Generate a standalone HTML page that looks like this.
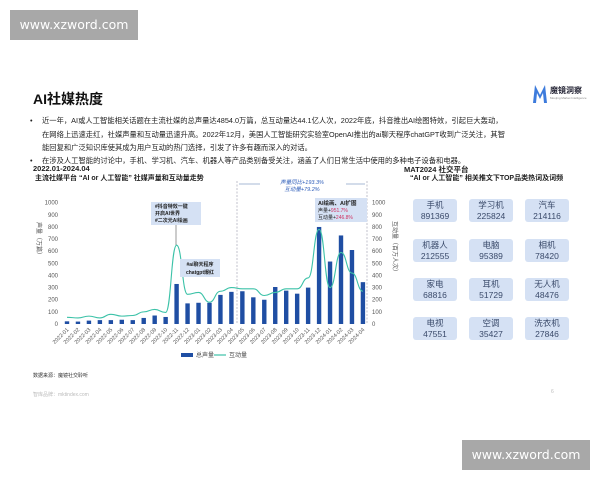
<!DOCTYPE html>
<html><head><meta charset="utf-8">
<style>
body{margin:0;width:600px;height:480px;background:#fff;position:relative;overflow:hidden;font-family:"Liberation Sans","Noto Sans CJK SC",sans-serif;color:#222}
.a{position:absolute;white-space:nowrap}
.wm{position:absolute;background:#a8a8a8;color:#fff;font-size:12.5px;width:128px;height:30px;line-height:30px;text-align:center;font-family:"DejaVu Sans","Liberation Sans",sans-serif}
.bl{font-size:7.3px;line-height:13.5px;color:#222}
.bx{position:absolute;width:44px;height:23px;background:#d5e1f4;border-radius:3px;color:#3a4a6a;font-size:8.5px;line-height:10.5px;text-align:center;padding-top:1px;box-sizing:border-box}
</style></head><body>
<div class="wm" style="left:10px;top:10px">www.xzword.com</div>
<div class="wm" style="left:462px;top:440px">www.xzword.com</div>

<div class="a" style="left:33px;top:89px;font-size:14px;font-weight:bold;color:#111">AI社媒热度</div>
<svg class="a" style="left:532px;top:84px" width="16" height="20" viewBox="0 0 16 20"><path d="M1 19 L3 1 L8 11 L13 1 L15 19 L12 19 L11 9 L8 15 L5 9 L4 19Z" fill="#3d7bdc"/></svg>
<div class="a" style="left:550px;top:85px;font-size:8px;font-weight:bold;color:#223">魔镜洞察</div>
<div class="a" style="left:550px;top:96px;font-size:3px;color:#888">Moojing Market Intelligence</div>

<div class="a bl" style="left:30px;top:114px">•</div>
<div class="a bl" style="left:42px;top:114px">近一年，AI或人工智能相关话题在主流社媒的总声量达4854.0万篇，总互动量达44.1亿人次，2022年底，抖音推出AI绘图特效，引起巨大轰动，</div>
<div class="a bl" style="left:42px;top:127.5px">在网络上迅速走红，社媒声量和互动量迅速升高。2022年12月，美国人工智能研究实验室OpenAI推出的ai聊天程序chatGPT收到广泛关注，其智</div>
<div class="a bl" style="left:42px;top:141px">能回复和广泛知识库使其成为用户互动的热门选择，引发了许多有趣而深入的对话。</div>
<div class="a bl" style="left:30px;top:154px">•</div>
<div class="a bl" style="left:42px;top:154px">在涉及人工智能的讨论中，手机、学习机、汽车、机器人等产品类别备受关注，涵盖了人们日常生活中使用的多种电子设备和电器。</div>

<div class="a" style="left:33px;top:164px;font-size:7.5px;font-weight:bold">2022.01-2024.04</div>
<div class="a" style="left:35px;top:173px;font-size:7px;font-weight:bold">主流社媒平台 “AI or 人工智能” 社媒声量和互动量走势</div>
<div class="a" style="left:404px;top:164px;font-size:7.5px;font-weight:bold">MAT2024 社交平台</div>
<div class="a" style="left:410px;top:173px;font-size:7px;font-weight:bold">“AI or 人工智能” 相关推文下TOP品类热词及词频</div>

<svg class="a" style="left:0;top:0" width="600" height="480" id="ch"></svg>

<div class="bx" style="left:413px;top:199px">手机<br>891369</div>
<div class="bx" style="left:469px;top:199px">学习机<br>225824</div>
<div class="bx" style="left:525px;top:199px">汽车<br>214116</div>
<div class="bx" style="left:413px;top:239px">机器人<br>212555</div>
<div class="bx" style="left:469px;top:239px">电脑<br>95389</div>
<div class="bx" style="left:525px;top:239px">相机<br>78420</div>
<div class="bx" style="left:413px;top:278px">家电<br>68816</div>
<div class="bx" style="left:469px;top:278px">耳机<br>51729</div>
<div class="bx" style="left:525px;top:278px">无人机<br>48476</div>
<div class="bx" style="left:413px;top:317px">电视<br>47551</div>
<div class="bx" style="left:469px;top:317px">空调<br>35427</div>
<div class="bx" style="left:525px;top:317px">洗衣机<br>27846</div>

<div class="a" style="left:33px;top:372px;font-size:5px;color:#333">数据来源：魔镜社交聆听</div>
<div class="a" style="left:33px;top:391px;font-size:5px;color:#bbb">智库品牌：mktindex.com</div>
<div class="a" style="left:551px;top:389px;font-size:5px;color:#bbb">6</div>

<script>
var bars=[22,20,28,32,32,35,32,50,70,58,330,170,175,175,240,265,270,220,200,305,275,250,300,800,515,730,610,345];
var line=[55,50,65,50,80,65,70,100,120,95,650,245,260,180,270,300,290,290,235,260,290,290,380,780,300,590,420,270];
var labs=["2022-01","2022-02","2022-03","2022-04","2022-05","2022-06","2022-07","2022-08","2022-09","2022-10","2022-11","2022-12","2023-01","2023-02","2023-03","2023-04","2023-05","2023-06","2023-07","2023-08","2023-09","2023-10","2023-11","2023-12","2024-01","2024-02","2024-03","2024-04"];
var y0=324,k=0.1213,x0=67,dx=10.96,s="";
function Y(v){return y0-v*k}
for(var i=0;i<=10;i++){var y=Y(i*100);
s+='<text x="58" y="'+(y+2)+'" font-size="6" fill="#555" text-anchor="end">'+(i*100)+'</text>';
s+='<text x="372" y="'+(y+2)+'" font-size="6" fill="#555">'+(i*100)+'</text>';}
s+='<text x="37" y="240" font-size="6" fill="#555" transform="rotate(90 37 240)" text-anchor="middle">声量（万篇）</text>';
s+='<text x="393" y="248" font-size="6" fill="#555" transform="rotate(90 393 248)" text-anchor="middle">互动量（百万人次）</text>';
for(i=0;i<28;i++){var x=x0+i*dx;
s+='<rect x="'+(x-2.2)+'" y="'+Y(bars[i])+'" width="4.4" height="'+(bars[i]*k)+'" fill="#1f4ea3"/>';
s+='<text x="'+(x+2)+'" y="330" font-size="5.5" fill="#555" text-anchor="end" transform="rotate(-45 '+(x+2)+' 330)">'+labs[i]+'</text>';}
var p="M"+x0+" "+Y(line[0]);
for(i=1;i<28;i++){var xa=x0+(i-1)*dx,xb=x0+i*dx;p+=" C"+(xa+dx/2)+" "+Y(line[i-1])+" "+(xb-dx/2)+" "+Y(line[i])+" "+xb+" "+Y(line[i]);}
s+='<path d="'+p+'" fill="none" stroke="#3cc2a8" stroke-width="1.1"/>';
s+='<line x1="237" y1="181" x2="237" y2="324" stroke="#99a" stroke-width="0.6" stroke-dasharray="2,1.5"/>';
s+='<line x1="367" y1="181" x2="367" y2="324" stroke="#99a" stroke-width="0.6" stroke-dasharray="2,1.5"/>';
s+='<line x1="239" y1="184" x2="260" y2="184" stroke="#8aa0c8" stroke-width="0.8"/><line x1="346" y1="184" x2="365" y2="184" stroke="#8aa0c8" stroke-width="0.8"/>';
s+='<text x="302" y="184" font-size="5.5" fill="#2a5ab8" font-style="italic" text-anchor="middle">声量同比+193.3%</text>';
s+='<text x="302" y="191" font-size="5.5" fill="#2a5ab8" font-style="italic" text-anchor="middle">互动量+79.2%</text>';
s+='<rect x="151" y="202" width="50" height="23" fill="#d5e1f4"/>';
s+='<text x="155" y="208" font-size="5" fill="#222" font-weight="bold">#抖音特效一键</text><text x="155" y="215" font-size="5" fill="#222" font-weight="bold">开启AI世界</text><text x="155" y="222" font-size="5" fill="#222" font-weight="bold">#二次元AI绘画</text>';
s+='<line x1="176" y1="225" x2="176" y2="245" stroke="#333" stroke-width="0.5"/>';
s+='<rect x="180" y="259" width="40" height="18" fill="#d5e1f4"/>';
s+='<text x="200" y="266" font-size="5" fill="#222" font-weight="bold" text-anchor="middle">#ai聊天程序</text><text x="200" y="274" font-size="5" fill="#222" font-weight="bold" text-anchor="middle">chatgpt爆红</text>';
s+='<rect x="315" y="198" width="52" height="24" fill="#d5e1f4"/>';
s+='<text x="318" y="205" font-size="5.5" fill="#222" font-weight="bold">AI绘画、AI扩图</text><text x="318" y="212" font-size="5" fill="#222">声量+<tspan fill="#d03060">951.7%</tspan></text><text x="318" y="219" font-size="5" fill="#222">互动量+<tspan fill="#d03060">246.8%</tspan></text>';
s+='<rect x="181" y="353" width="12" height="4" fill="#1f4ea3"/><text x="196" y="357" font-size="6" fill="#444">总声量</text>';
s+='<line x1="214" y1="355" x2="226" y2="355" stroke="#3cc2a8" stroke-width="1.2"/><text x="229" y="357" font-size="6" fill="#444">互动量</text>';
document.getElementById('ch').innerHTML=s;
</script>
</body></html>
